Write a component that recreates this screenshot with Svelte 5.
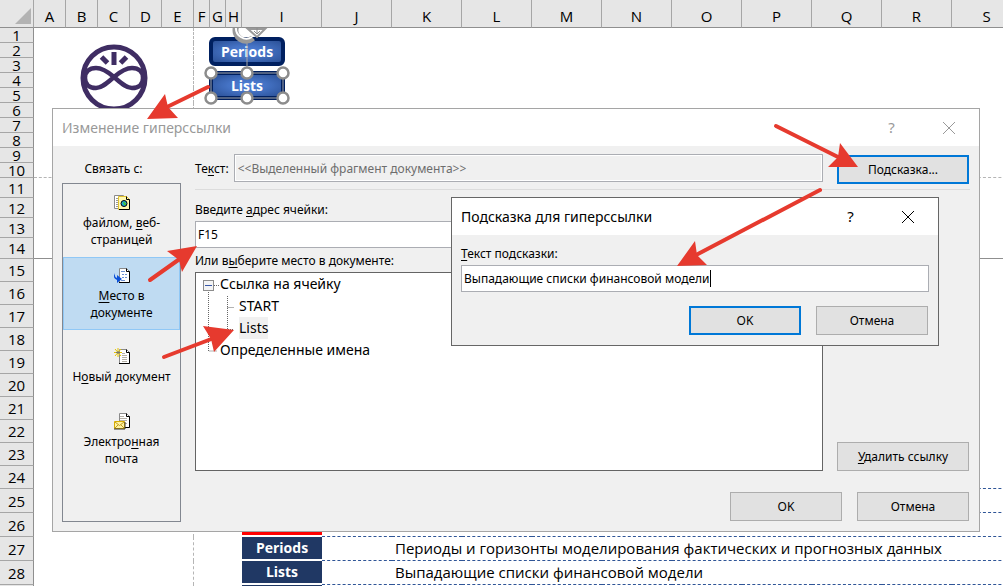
<script>
  const columns = [
    ['A', 32], ['B', 32], ['C', 32], ['D', 32], ['E', 32],
    ['F', 16], ['G', 16], ['H', 16], ['I', 80],
    ['J', 70], ['K', 70], ['L', 70], ['M', 70], ['N', 70], ['O', 70],
    ['P', 70], ['Q', 70], ['R', 70], ['S', 70]
  ];
  const height = (n) => (n <= 10 ? 15 : n <= 13 ? 20 : n === 14 ? 21 : n <= 24 ? 23 : 24);
  const rows = Array.from({ length: 29 }, (_, i) => ({ n: i + 1, h: height(i + 1) }));
  const badge = { 26: '', 27: 'Periods', 28: 'Lists', 29: '' };
  const notes = {
    27: 'Периоды и горизонты моделирования фактических и прогнозных данных',
    28: 'Выпадающие списки финансовой модели'
  };
  const arrows = [
    { line: 'M208 87L167 107', head: '147,119 165,94 168,107 178,118' },
    { line: 'M776 126L840 158', head: '858,167 840,143 838,157 828,167' },
    { line: 'M820 190L696 255', head: '677,266 695,241 697,255 707,265' },
    { line: 'M150 280L181 258', head: '197,246 167,251 179,260 182,272' },
    { line: 'M164 357L214 338', head: '234,330 203,326 211,339 214,352' }
  ];
  const handles = [[211, 73], [247, 73], [283, 73], [211, 98], [247, 98], [283, 98]];
  let address = $state('F15');
  let tip = $state('Выпадающие списки финансовой модели');
</script>

{#snippet page()}
  <path d="M5.500 1.500H12.500L15.500 4.500V15.500H5.500Z" fill="#fff" stroke="#8a8a8a" />
  <path d="M12.500 1.500V4.500H15.500V15.500H5" fill="none" stroke="#000" />
{/snippet}

<main class="desktop">
  <table class="sheet">
    <colgroup>
      <col style="width: 34px" />
      {#each columns as [name, w] (name)}<col style="width: {w}px" />{/each}
    </colgroup>
    <thead>
      <tr>
        <th class="corner"><svg width="33" height="27"><path d="M31 8V24H15Z" fill="#b3b3b3" /></svg></th>
        {#each columns as [name] (name)}<th scope="col">{name}</th>{/each}
      </tr>
    </thead>
    <tbody>
      {#each rows as row (row.n)}
        <tr class:ruled={row.n >= 24} class:breakline={row.n === 10} class:solid={row.n === 14} style="height: {row.h}px">
          <th scope="row">{#if row.n < 29}<span>{row.n}</span>{/if}</th>
          {#each columns as [name] (name)}
            <td class:pagebreak={name === 'E'} class:rule={columns.findIndex((c) => c[0] === name) > 8}>
              {#if name === 'I' && row.n in badge}
                <b class="badge" class:red={row.n === 26}>{badge[row.n]}</b>
              {:else if name === 'K' && notes[row.n]}
                <span class="note">{notes[row.n]}</span>
              {/if}
            </td>
          {/each}
        </tr>
      {/each}
    </tbody>
  </table>

  <svg class="logo" width="68" height="68" viewBox="0 0 68 68" fill="none" stroke="#3f2d63" aria-hidden="true">
    <circle cx="34" cy="34" r="31" stroke-width="5" />
    <path d="M34 33C27 27 22 24 16 24C9 24 5 28 5 34C5 40 9 44 16 44C22 44 27 39 34 33C41 27 46 24 52 24C59 24 63 28 63 34C63 40 59 44 52 44C46 44 41 39 34 33Z" stroke-width="4.500" />
    <path d="M34 8V21M21.500 13L27.500 19M46.500 13L40.500 19" stroke-width="5" />
  </svg>

  <button class="shape periods">Periods</button>
  <button class="shape lists">Lists</button>
  <svg class="overlay" width="320" height="110" aria-hidden="true">
    <clipPath id="grid"><rect y="28" width="320" height="90" /></clipPath>
    <g clip-path="url(#grid)" fill="none" stroke="#8c8c8c">
      <path d="M247 38V73M211 73H283V98H211Z" stroke="#a3a3a3" />
      <path d="M253 38A10.500 10.500 0 0 1 236 27" stroke="#999" stroke-width="6" />
      <path d="M252 37A10.500 10.500 0 0 1 236 27" stroke="#fff" stroke-width="2" />
      <path d="M248 29H265L257 37Z" fill="#fff" stroke="#999" stroke-width="2" />
      <path d="M257 27V33M254 31L257 34L260 31" />
      {#each handles as [x, y]}<circle cx={x} cy={y} r="5.500" fill="#fff" stroke-width="2.500" />{/each}
    </g>
  </svg>

  <section class="window outer" aria-label="Изменение гиперссылки">
    <header>
      <h2>Изменение гиперссылки</h2>
      <button class="icon" aria-label="Справка">?</button>
      <button class="icon" aria-label="Закрыть"><svg width="14" height="14"><path d="M1 1L13 13M13 1L1 13" stroke="currentColor" /></svg></button>
    </header>
    <div class="body">
      <div class="links">
        <p>Связать с:</p>
        <nav>
          <button>
            <svg width="16" height="17" aria-hidden="true">
              <path d="M.5 1.500H9.500V14.500H.5Z" fill="#fff" stroke="#8a8a8a" />
              <path d="M2 4.500H5M2 6.500H5M2 8.500H5M2 10.500H5M2 12.500H5" stroke="#999" />
              <path d="M4.500 2.500H12.500L15.500 5.500V15.500H4.500Z" fill="#fff9b0" stroke="#e0c030" />
              <path d="M12.500 2.500V5.500H15.500V15.500H5" fill="none" stroke="#000" />
              <circle cx="10" cy="9.500" r="3" fill="#1ba8d8" stroke="#000" />
              <path d="M9 8H11V9H12V11H10Z" fill="#40c040" />
            </svg>
            <span>файлом, <u>в</u>еб-<br />страницей</span>
          </button>
          <button class="selected">
            <svg width="16" height="17" aria-hidden="true">
              {@render page()}
              <path d="M7 4.500H11M8 7.500H10M11 7.500H13M8 10.500H10M11 10.500H13M7 13.500H11" stroke="#6c8fd0" />
              <path d="M1 6Q0 10 3 11V8L8 12L3 16V13Q-2 11 1 6Z" fill="#0a50d8" />
            </svg>
            <span><u>М</u>есто в<br />документе</span>
          </button>
          <button>
            <svg width="16" height="17" aria-hidden="true">
              {@render page()}
              <path d="M8 5.500H11M8 7.500H13M8 9.500H13M8 11.500H13M8 13.500H13" stroke="#b5b0a5" />
              <path d="M4 0V9M0 4.500H8M1 1L7 8M7 1L1 8" stroke="#e5c400" />
              <path d="M4 3V6M2 4.500H6" stroke="#777" />
            </svg>
            <span>Н<u>о</u>вый документ</span>
          </button>
          <button>
            <svg width="16" height="17" aria-hidden="true">
              <g transform="translate(0 -1)">{@render page()}</g>
              <path d="M6 3.500H10M6 5.500H13M6 7.500H13M11 10.500H13" stroke="#b5b0a5" />
              <path d="M.5 8.500H10.500V15.500H.5Z" fill="#fff3a0" stroke="#d8ac00" />
              <path d="M1 9L5.500 12.500L10 9M1 15L4 12M10 15L7 12" fill="none" stroke="#c09a20" />
              <path d="M0 16H11V9" fill="none" stroke="#333" />
            </svg>
            <span>Электро<u>н</u>ная<br />почта</span>
          </button>
        </nav>
      </div>
      <div class="main">
        <div class="row top">
          <div class="field text">
            <label for="shown">Те<u>к</u>ст:</label>
            <input id="shown" disabled value="<<Выделенный фрагмент документа>>" />
          </div>
          <button class="btn side primary">Подсказка...</button>
        </div>
        <hr />
        <div class="row grow">
          <div class="place">
            <label for="address">Введите <u>а</u>дрес ячейки:</label>
            <input id="address" bind:value={address} />
            <p id="tree-label">Или в<u>ы</u>берите место в документе:</p>
            <ul class="tree" role="tree" aria-labelledby="tree-label">
              <svg width="44" height="80" aria-hidden="true">
                <path d="M12.500 19V78H21M18 12.500H24M31.500 23V56.500H38M31.500 34.500H38" fill="none" stroke="#666" stroke-dasharray="1 1" />
                <rect x="7.500" y="7.500" width="10" height="10" fill="#f4f4f4" stroke="#8c8c8c" />
                <path d="M9 12.500H16" stroke="#3858a8" />
              </svg>
              <li role="treeitem" aria-selected="false">Ссылка на ячейку</li>
              <li role="treeitem" aria-selected="false" class="child">START</li>
              <li role="treeitem" aria-selected="true" class="child"><span>Lists</span></li>
              <li role="treeitem" aria-selected="false">Определенные имена</li>
            </ul>
          </div>
          <button class="btn side"><u>У</u>далить ссылку</button>
        </div>
        <footer>
          <button class="btn">OK</button>
          <button class="btn">Отмена</button>
        </footer>
      </div>
    </div>
  </section>

  <section class="window inner" aria-label="Подсказка для гиперссылки">
    <header>
      <h2>Подсказка для гиперссылки</h2>
      <button class="icon" aria-label="Справка">?</button>
      <button class="icon" aria-label="Закрыть"><svg width="14" height="14"><path d="M1 1L13 13M13 1L1 13" stroke="currentColor" /></svg></button>
    </header>
    <div class="content">
      <label for="tip"><u>Т</u>екст подсказки:</label>
      <div class="edit">
        <input id="tip" bind:value={tip} size="1" />
        <i class="caret"></i>
      </div>
      <footer>
        <button class="btn primary">OK</button>
        <button class="btn">Отмена</button>
      </footer>
    </div>
  </section>

  <svg class="overlay" width="1003" height="586" aria-hidden="true">
    {#each arrows as a}
      <path d={a.line} stroke="#e63a2e" stroke-width="4" stroke-linecap="round" />
      <polygon points={a.head} fill="#e63a2e" />
    {/each}
  </svg>
</main>

<style>
  :global(body) { margin: 0; }
  .desktop {
    position: relative;
    height: 100vh;
    overflow: hidden;
    background: #fff;
    color: #000;
    font: 12px/17px "Noto Sans", "Open Sans", sans-serif;
  }
  .desktop * { box-sizing: border-box; }
  h2, p, ul { margin: 0; padding: 0; font-weight: 400; }
  button, input { font: inherit; color: inherit; border-radius: 0; margin: 0; }
  u { text-underline-offset: 2px; }

  .sheet {
    table-layout: fixed;
    width: 1022px;
    border-collapse: separate;
    border-spacing: 0;
    font: 15px/20px "Open Sans", "Noto Sans", sans-serif;
  }
  .sheet th, .sheet td { padding: 0; font-weight: 400; }
  .sheet th { background: #e6e6e6; border: solid #a6a6a6; border-width: 0 1px 1px 0; }
  thead tr { height: 28px; }
  .sheet thead th { border-bottom-color: #8f8f8f; padding-top: 4px; }
  .sheet thead .corner { padding: 0; }
  .corner svg { display: block; }
  .sheet tbody th { border-right-color: #8f8f8f; }
  tbody th span { display: block; height: 14px; line-height: 14px; }
  td { white-space: nowrap; line-height: 0; vertical-align: top; }
  .pagebreak { border-right: 1px dashed #b5b5b5; }
  .breakline td { border-bottom: 1px dashed #b5b5b5; }
  .solid td { border-bottom: 1px solid #8f8f8f; }
  .ruled .rule { border-bottom: 1px dashed #2f5597; }
  .badge {
    display: block;
    height: 22px;
    background: #203864;
    color: #fff;
    font: 700 14px/22px "Open Sans", sans-serif;
    text-align: center;
  }
  .badge.red { background: #f00; }
  .note { display: block; width: max-content; padding-left: 3px; font: 15px/22px "Open Sans", sans-serif; }

  .logo { position: absolute; left: 80px; top: 44px; }
  .shape {
    position: absolute;
    left: 209px;
    width: 76px;
    height: 29px;
    padding: 0;
    border: 4px solid #002060;
    border-radius: 6px;
    background: radial-gradient(#4f80d8, #4472c4 40%, #2b5096);
    color: #fff;
    font: 700 14px/20px "Open Sans", sans-serif;
  }
  .periods { top: 37px; }
  .lists { top: 71px; }
  .overlay { position: absolute; left: 0; top: 0; pointer-events: none; }

  .window { position: absolute; display: flex; flex-direction: column; background: #f0f0f0; border: 1px solid #a5a5a5; }
  .outer { left: 52px; right: 23px; top: 108px; }
  .inner { left: 451px; right: 64px; top: 197px; border-color: #666; }
  header { display: flex; align-items: center; height: 37px; padding: 0 2px 0 9px; background: #fff; }
  h2 { flex: 1; font-size: 14px; line-height: 20px; }
  .outer header { color: #999; }
  .icon { width: 57px; height: 37px; padding: 0; border: 0; background: none; font-size: 15px; display: grid; place-items: center; }

  .body { display: flex; gap: 14px; padding: 8px 9px 9px; }
  .links { width: 119px; }
  .links p { text-align: center; padding: 6px 16px 6px 0; }
  nav { height: 339px; border: 1px solid #828790; }
  nav button {
    display: flex;
    flex-direction: column;
    align-items: center;
    justify-content: center;
    gap: 3px;
    width: 100%;
    height: 73px;
    padding: 0;
    border: 1px solid transparent;
    background: none;
  }
  nav button svg { display: block; }
  nav .selected { background: #bfdbf2; border-color: #90c8f6; }
  .main { flex: 1; display: flex; flex-direction: column; padding-bottom: 1px; }
  .row { display: flex; justify-content: space-between; gap: 14px; padding-right: 1px; }
  .top { height: 30px; align-items: flex-end; }
  .field { flex: 1; display: flex; align-items: center; align-self: flex-start; gap: 5px; }
  .grow { flex: 1; align-items: flex-end; }
  input { flex: 1; width: 100%; height: 27px; padding: 0 2px; border: 1px solid #abadb3; background: #fff; outline: 0; }
  input:disabled { height: 28px; padding: 0 3px; color: #6d6d6d; background: #f0f0f0; border-color: #abadb3; box-shadow: inset 0 0 0 1px #fff; }
  .btn { width: 112px; height: 29px; padding: 0; border: 1px solid #adadad; background: #e1e1e1; }
  .btn.side { width: 132px; }
  .btn.primary { border: 2px solid #0078d7; }
  hr { width: 100%; height: 1px; margin: 5px 0 0; border: 0; background: #dcdcdc; }
  .place { flex: 1; display: flex; flex-direction: column; padding-top: 10px; }
  .place label { padding-bottom: 3px; }
  .place input { flex: none; }
  .place p { padding: 4px 0 3px; }
  .tree { position: relative; height: 199px; border: 1px solid #646464; background: #fff; list-style: none; font-size: 14px; line-height: 22px; }
  .tree svg { position: absolute; left: 0; top: 0; }
  .tree li { padding-left: 24px; }
  .tree .child { padding-left: 43px; }
  .tree span { display: inline-block; background: #f0f0f0; }
  footer { display: flex; justify-content: flex-end; gap: 15px; padding: 21px 1px 0 0; }
  .content { display: flex; flex-direction: column; padding: 10px 9px; }
  .content label { padding-bottom: 3px; }
  .content footer { padding-top: 14px; }
  .edit { display: flex; align-items: center; height: 27px; background: #fff; border: 1px solid #abadb3; }
  .edit input { flex: none; width: auto; field-sizing: content; height: 25px; padding: 0 0 0 2px; border: 0; }
  .caret { width: 1px; height: 17px; background: #000; }
</style>
